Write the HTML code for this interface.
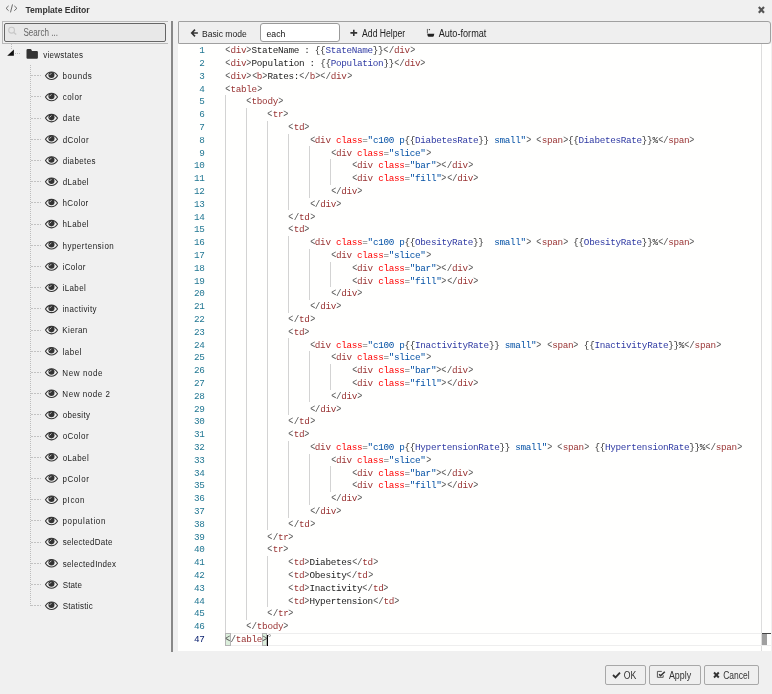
<!DOCTYPE html>
<html><head><meta charset="utf-8">
<style>
html,body{margin:0;padding:0;}
body{width:772px;height:694px;background:#f0f0f0;position:relative;overflow:hidden;font-family:"Liberation Sans",sans-serif;color:#333;}
.abs{position:absolute;}
#search{position:absolute;left:2px;top:21px;width:166px;height:23px;border-top:1px solid #b9b9b9;border-bottom:1px solid #b9b9b9;border-left:1px solid #b9b9b9;box-sizing:border-box;}
#search .in{position:absolute;left:1px;top:1px;width:162px;height:19px;border:1px solid #666;border-radius:2px;background:#e8e8e8;box-sizing:border-box;}
#splitter{position:absolute;left:171px;top:21px;width:2px;height:631px;background:#888;}
#toolbar{position:absolute;left:178px;top:21px;width:593px;height:23px;border:1px solid #a0a0a0;border-radius:1px 3px 3px 1px;background:#efefef;box-sizing:border-box;}
#each{position:absolute;left:260px;top:23px;width:80px;height:19px;border:1px solid #9a9a9a;border-radius:3px;background:#fff;box-sizing:border-box;}
#editor{position:absolute;left:178px;top:44px;width:593px;height:607px;background:#fffffe;overflow:hidden;}
#vline{position:absolute;left:761px;top:44px;width:1px;height:607px;background:#ddd;}
.ln,.num{position:absolute;font-family:"Liberation Mono",monospace;font-size:9.3px;letter-spacing:-0.307px;line-height:12.8px;height:12.8px;white-space:pre;color:#222;}
.num{left:174.6px;width:30px;text-align:right;color:#237893;}
.num.act{color:#0b216f;}
.p{color:#555;} .br{display:inline-block;transform:scale(0.9,1.25);transform-origin:50% 68%;} .t{color:#933;} .a{color:#ff0000;} .s{color:#0451a5;} .d{color:#333;} .v{color:#2f3aa3;}
.g{position:absolute;width:1px;height:12.8px;background:#d3d3d3;}
#actline{position:absolute;left:225px;top:633px;width:546px;height:13px;border-top:1px solid #eee;border-bottom:1px solid #eee;box-sizing:border-box;}
.hd{position:absolute;left:31px;width:10px;height:1px;background:repeating-linear-gradient(90deg,#c2c2c2 0 2px,transparent 2px 3px);}
.btn{position:absolute;top:665px;height:20px;border:1px solid #a8a8a8;border-radius:2px;background:#efefef;box-sizing:border-box;}
#ov{position:absolute;left:0;top:0;}
#ov text{font-family:"Liberation Sans",sans-serif;}
</style></head><body><div id="root" style="position:absolute;left:0;top:0;width:772px;height:694px;will-change:transform;">
<div id="search"><div class="in"></div></div>
<div id="splitter"></div>
<div id="toolbar"></div>
<div id="each"></div>
<div id="editor"></div>
<div id="vline"></div>
<div id="actline"></div>
<div class="g" style="left:225px;top:95.20px"></div><div class="g" style="left:225px;top:108.00px"></div><div class="g" style="left:246px;top:108.00px"></div><div class="g" style="left:225px;top:120.80px"></div><div class="g" style="left:246px;top:120.80px"></div><div class="g" style="left:267px;top:120.80px"></div><div class="g" style="left:225px;top:133.60px"></div><div class="g" style="left:246px;top:133.60px"></div><div class="g" style="left:267px;top:133.60px"></div><div class="g" style="left:288px;top:133.60px"></div><div class="g" style="left:225px;top:146.40px"></div><div class="g" style="left:246px;top:146.40px"></div><div class="g" style="left:267px;top:146.40px"></div><div class="g" style="left:288px;top:146.40px"></div><div class="g" style="left:309px;top:146.40px"></div><div class="g" style="left:225px;top:159.20px"></div><div class="g" style="left:246px;top:159.20px"></div><div class="g" style="left:267px;top:159.20px"></div><div class="g" style="left:288px;top:159.20px"></div><div class="g" style="left:309px;top:159.20px"></div><div class="g" style="left:330px;top:159.20px"></div><div class="g" style="left:225px;top:172.00px"></div><div class="g" style="left:246px;top:172.00px"></div><div class="g" style="left:267px;top:172.00px"></div><div class="g" style="left:288px;top:172.00px"></div><div class="g" style="left:309px;top:172.00px"></div><div class="g" style="left:330px;top:172.00px"></div><div class="g" style="left:225px;top:184.80px"></div><div class="g" style="left:246px;top:184.80px"></div><div class="g" style="left:267px;top:184.80px"></div><div class="g" style="left:288px;top:184.80px"></div><div class="g" style="left:309px;top:184.80px"></div><div class="g" style="left:225px;top:197.60px"></div><div class="g" style="left:246px;top:197.60px"></div><div class="g" style="left:267px;top:197.60px"></div><div class="g" style="left:288px;top:197.60px"></div><div class="g" style="left:225px;top:210.40px"></div><div class="g" style="left:246px;top:210.40px"></div><div class="g" style="left:267px;top:210.40px"></div><div class="g" style="left:225px;top:223.20px"></div><div class="g" style="left:246px;top:223.20px"></div><div class="g" style="left:267px;top:223.20px"></div><div class="g" style="left:225px;top:236.00px"></div><div class="g" style="left:246px;top:236.00px"></div><div class="g" style="left:267px;top:236.00px"></div><div class="g" style="left:288px;top:236.00px"></div><div class="g" style="left:225px;top:248.80px"></div><div class="g" style="left:246px;top:248.80px"></div><div class="g" style="left:267px;top:248.80px"></div><div class="g" style="left:288px;top:248.80px"></div><div class="g" style="left:309px;top:248.80px"></div><div class="g" style="left:225px;top:261.60px"></div><div class="g" style="left:246px;top:261.60px"></div><div class="g" style="left:267px;top:261.60px"></div><div class="g" style="left:288px;top:261.60px"></div><div class="g" style="left:309px;top:261.60px"></div><div class="g" style="left:330px;top:261.60px"></div><div class="g" style="left:225px;top:274.40px"></div><div class="g" style="left:246px;top:274.40px"></div><div class="g" style="left:267px;top:274.40px"></div><div class="g" style="left:288px;top:274.40px"></div><div class="g" style="left:309px;top:274.40px"></div><div class="g" style="left:330px;top:274.40px"></div><div class="g" style="left:225px;top:287.20px"></div><div class="g" style="left:246px;top:287.20px"></div><div class="g" style="left:267px;top:287.20px"></div><div class="g" style="left:288px;top:287.20px"></div><div class="g" style="left:309px;top:287.20px"></div><div class="g" style="left:225px;top:300.00px"></div><div class="g" style="left:246px;top:300.00px"></div><div class="g" style="left:267px;top:300.00px"></div><div class="g" style="left:288px;top:300.00px"></div><div class="g" style="left:225px;top:312.80px"></div><div class="g" style="left:246px;top:312.80px"></div><div class="g" style="left:267px;top:312.80px"></div><div class="g" style="left:225px;top:325.60px"></div><div class="g" style="left:246px;top:325.60px"></div><div class="g" style="left:267px;top:325.60px"></div><div class="g" style="left:225px;top:338.40px"></div><div class="g" style="left:246px;top:338.40px"></div><div class="g" style="left:267px;top:338.40px"></div><div class="g" style="left:288px;top:338.40px"></div><div class="g" style="left:225px;top:351.20px"></div><div class="g" style="left:246px;top:351.20px"></div><div class="g" style="left:267px;top:351.20px"></div><div class="g" style="left:288px;top:351.20px"></div><div class="g" style="left:309px;top:351.20px"></div><div class="g" style="left:225px;top:364.00px"></div><div class="g" style="left:246px;top:364.00px"></div><div class="g" style="left:267px;top:364.00px"></div><div class="g" style="left:288px;top:364.00px"></div><div class="g" style="left:309px;top:364.00px"></div><div class="g" style="left:330px;top:364.00px"></div><div class="g" style="left:225px;top:376.80px"></div><div class="g" style="left:246px;top:376.80px"></div><div class="g" style="left:267px;top:376.80px"></div><div class="g" style="left:288px;top:376.80px"></div><div class="g" style="left:309px;top:376.80px"></div><div class="g" style="left:330px;top:376.80px"></div><div class="g" style="left:225px;top:389.60px"></div><div class="g" style="left:246px;top:389.60px"></div><div class="g" style="left:267px;top:389.60px"></div><div class="g" style="left:288px;top:389.60px"></div><div class="g" style="left:309px;top:389.60px"></div><div class="g" style="left:225px;top:402.40px"></div><div class="g" style="left:246px;top:402.40px"></div><div class="g" style="left:267px;top:402.40px"></div><div class="g" style="left:288px;top:402.40px"></div><div class="g" style="left:225px;top:415.20px"></div><div class="g" style="left:246px;top:415.20px"></div><div class="g" style="left:267px;top:415.20px"></div><div class="g" style="left:225px;top:428.00px"></div><div class="g" style="left:246px;top:428.00px"></div><div class="g" style="left:267px;top:428.00px"></div><div class="g" style="left:225px;top:440.80px"></div><div class="g" style="left:246px;top:440.80px"></div><div class="g" style="left:267px;top:440.80px"></div><div class="g" style="left:288px;top:440.80px"></div><div class="g" style="left:225px;top:453.60px"></div><div class="g" style="left:246px;top:453.60px"></div><div class="g" style="left:267px;top:453.60px"></div><div class="g" style="left:288px;top:453.60px"></div><div class="g" style="left:309px;top:453.60px"></div><div class="g" style="left:225px;top:466.40px"></div><div class="g" style="left:246px;top:466.40px"></div><div class="g" style="left:267px;top:466.40px"></div><div class="g" style="left:288px;top:466.40px"></div><div class="g" style="left:309px;top:466.40px"></div><div class="g" style="left:330px;top:466.40px"></div><div class="g" style="left:225px;top:479.20px"></div><div class="g" style="left:246px;top:479.20px"></div><div class="g" style="left:267px;top:479.20px"></div><div class="g" style="left:288px;top:479.20px"></div><div class="g" style="left:309px;top:479.20px"></div><div class="g" style="left:330px;top:479.20px"></div><div class="g" style="left:225px;top:492.00px"></div><div class="g" style="left:246px;top:492.00px"></div><div class="g" style="left:267px;top:492.00px"></div><div class="g" style="left:288px;top:492.00px"></div><div class="g" style="left:309px;top:492.00px"></div><div class="g" style="left:225px;top:504.80px"></div><div class="g" style="left:246px;top:504.80px"></div><div class="g" style="left:267px;top:504.80px"></div><div class="g" style="left:288px;top:504.80px"></div><div class="g" style="left:225px;top:517.60px"></div><div class="g" style="left:246px;top:517.60px"></div><div class="g" style="left:267px;top:517.60px"></div><div class="g" style="left:225px;top:530.40px"></div><div class="g" style="left:246px;top:530.40px"></div><div class="g" style="left:225px;top:543.20px"></div><div class="g" style="left:246px;top:543.20px"></div><div class="g" style="left:225px;top:556.00px"></div><div class="g" style="left:246px;top:556.00px"></div><div class="g" style="left:267px;top:556.00px"></div><div class="g" style="left:225px;top:568.80px"></div><div class="g" style="left:246px;top:568.80px"></div><div class="g" style="left:267px;top:568.80px"></div><div class="g" style="left:225px;top:581.60px"></div><div class="g" style="left:246px;top:581.60px"></div><div class="g" style="left:267px;top:581.60px"></div><div class="g" style="left:225px;top:594.40px"></div><div class="g" style="left:246px;top:594.40px"></div><div class="g" style="left:267px;top:594.40px"></div><div class="g" style="left:225px;top:607.20px"></div><div class="g" style="left:246px;top:607.20px"></div><div class="g" style="left:225px;top:620.00px"></div>
<div class="abs" style="left:225px;top:633px;width:6px;height:13px;background:#dcefdc;border:1px solid #b4b4b4;box-sizing:border-box;"></div>
<div class="abs" style="left:262px;top:633px;width:5px;height:13px;background:#dcefdc;border:1px solid #b4b4b4;box-sizing:border-box;"></div>
<div class="ln" style="top:45.20px;left:225.20px"><span class="p br">&lt;</span><span class="t">div</span><span class="p br">&gt;</span>StateName : <span class="d">{{</span><span class="v">StateName</span><span class="d">}}</span><span class="p br">&lt;</span><span class="p">/</span><span class="t">div</span><span class="p br">&gt;</span></div><div class="num" style="top:45.20px">1</div><div class="ln" style="top:58.00px;left:225.20px"><span class="p br">&lt;</span><span class="t">div</span><span class="p br">&gt;</span>Population : <span class="d">{{</span><span class="v">Population</span><span class="d">}}</span><span class="p br">&lt;</span><span class="p">/</span><span class="t">div</span><span class="p br">&gt;</span></div><div class="num" style="top:58.00px">2</div><div class="ln" style="top:70.80px;left:225.20px"><span class="p br">&lt;</span><span class="t">div</span><span class="p br">&gt;</span><span class="p br">&lt;</span><span class="t">b</span><span class="p br">&gt;</span>Rates:<span class="p br">&lt;</span><span class="p">/</span><span class="t">b</span><span class="p br">&gt;</span><span class="p br">&lt;</span><span class="p">/</span><span class="t">div</span><span class="p br">&gt;</span></div><div class="num" style="top:70.80px">3</div><div class="ln" style="top:83.60px;left:225.20px"><span class="p br">&lt;</span><span class="t">table</span><span class="p br">&gt;</span></div><div class="num" style="top:83.60px">4</div><div class="ln" style="top:96.40px;left:246.29px"><span class="p br">&lt;</span><span class="t">tbody</span><span class="p br">&gt;</span></div><div class="num" style="top:96.40px">5</div><div class="ln" style="top:109.20px;left:267.38px"><span class="p br">&lt;</span><span class="t">tr</span><span class="p br">&gt;</span></div><div class="num" style="top:109.20px">6</div><div class="ln" style="top:122.00px;left:288.48px"><span class="p br">&lt;</span><span class="t">td</span><span class="p br">&gt;</span></div><div class="num" style="top:122.00px">7</div><div class="ln" style="top:134.80px;left:309.57px"><span class="p br">&lt;</span><span class="t">div</span> <span class="a">class</span><span class="p">=</span><span class="s">&quot;</span><span class="s">c100 p</span><span class="d">{{</span><span class="v">DiabetesRate</span><span class="d">}}</span><span class="s"> small</span><span class="s">&quot;</span><span class="p br">&gt;</span> <span class="p br">&lt;</span><span class="t">span</span><span class="p br">&gt;</span><span class="d">{{</span><span class="v">DiabetesRate</span><span class="d">}}</span>%<span class="p br">&lt;</span><span class="p">/</span><span class="t">span</span><span class="p br">&gt;</span></div><div class="num" style="top:134.80px">8</div><div class="ln" style="top:147.60px;left:330.66px"><span class="p br">&lt;</span><span class="t">div</span> <span class="a">class</span><span class="p">=</span><span class="s">&quot;</span><span class="s">slice</span><span class="s">&quot;</span><span class="p br">&gt;</span></div><div class="num" style="top:147.60px">9</div><div class="ln" style="top:160.40px;left:351.75px"><span class="p br">&lt;</span><span class="t">div</span> <span class="a">class</span><span class="p">=</span><span class="s">&quot;</span><span class="s">bar</span><span class="s">&quot;</span><span class="p br">&gt;</span><span class="p br">&lt;</span><span class="p">/</span><span class="t">div</span><span class="p br">&gt;</span></div><div class="num" style="top:160.40px">10</div><div class="ln" style="top:173.20px;left:351.75px"><span class="p br">&lt;</span><span class="t">div</span> <span class="a">class</span><span class="p">=</span><span class="s">&quot;</span><span class="s">fill</span><span class="s">&quot;</span><span class="p br">&gt;</span><span class="p br">&lt;</span><span class="p">/</span><span class="t">div</span><span class="p br">&gt;</span></div><div class="num" style="top:173.20px">11</div><div class="ln" style="top:186.00px;left:330.66px"><span class="p br">&lt;</span><span class="p">/</span><span class="t">div</span><span class="p br">&gt;</span></div><div class="num" style="top:186.00px">12</div><div class="ln" style="top:198.80px;left:309.57px"><span class="p br">&lt;</span><span class="p">/</span><span class="t">div</span><span class="p br">&gt;</span></div><div class="num" style="top:198.80px">13</div><div class="ln" style="top:211.60px;left:288.48px"><span class="p br">&lt;</span><span class="p">/</span><span class="t">td</span><span class="p br">&gt;</span></div><div class="num" style="top:211.60px">14</div><div class="ln" style="top:224.40px;left:288.48px"><span class="p br">&lt;</span><span class="t">td</span><span class="p br">&gt;</span></div><div class="num" style="top:224.40px">15</div><div class="ln" style="top:237.20px;left:309.57px"><span class="p br">&lt;</span><span class="t">div</span> <span class="a">class</span><span class="p">=</span><span class="s">&quot;</span><span class="s">c100 p</span><span class="d">{{</span><span class="v">ObesityRate</span><span class="d">}}</span><span class="s">  small</span><span class="s">&quot;</span><span class="p br">&gt;</span> <span class="p br">&lt;</span><span class="t">span</span><span class="p br">&gt;</span> <span class="d">{{</span><span class="v">ObesityRate</span><span class="d">}}</span>%<span class="p br">&lt;</span><span class="p">/</span><span class="t">span</span><span class="p br">&gt;</span></div><div class="num" style="top:237.20px">16</div><div class="ln" style="top:250.00px;left:330.66px"><span class="p br">&lt;</span><span class="t">div</span> <span class="a">class</span><span class="p">=</span><span class="s">&quot;</span><span class="s">slice</span><span class="s">&quot;</span><span class="p br">&gt;</span></div><div class="num" style="top:250.00px">17</div><div class="ln" style="top:262.80px;left:351.75px"><span class="p br">&lt;</span><span class="t">div</span> <span class="a">class</span><span class="p">=</span><span class="s">&quot;</span><span class="s">bar</span><span class="s">&quot;</span><span class="p br">&gt;</span><span class="p br">&lt;</span><span class="p">/</span><span class="t">div</span><span class="p br">&gt;</span></div><div class="num" style="top:262.80px">18</div><div class="ln" style="top:275.60px;left:351.75px"><span class="p br">&lt;</span><span class="t">div</span> <span class="a">class</span><span class="p">=</span><span class="s">&quot;</span><span class="s">fill</span><span class="s">&quot;</span><span class="p br">&gt;</span><span class="p br">&lt;</span><span class="p">/</span><span class="t">div</span><span class="p br">&gt;</span></div><div class="num" style="top:275.60px">19</div><div class="ln" style="top:288.40px;left:330.66px"><span class="p br">&lt;</span><span class="p">/</span><span class="t">div</span><span class="p br">&gt;</span></div><div class="num" style="top:288.40px">20</div><div class="ln" style="top:301.20px;left:309.57px"><span class="p br">&lt;</span><span class="p">/</span><span class="t">div</span><span class="p br">&gt;</span></div><div class="num" style="top:301.20px">21</div><div class="ln" style="top:314.00px;left:288.48px"><span class="p br">&lt;</span><span class="p">/</span><span class="t">td</span><span class="p br">&gt;</span></div><div class="num" style="top:314.00px">22</div><div class="ln" style="top:326.80px;left:288.48px"><span class="p br">&lt;</span><span class="t">td</span><span class="p br">&gt;</span></div><div class="num" style="top:326.80px">23</div><div class="ln" style="top:339.60px;left:309.57px"><span class="p br">&lt;</span><span class="t">div</span> <span class="a">class</span><span class="p">=</span><span class="s">&quot;</span><span class="s">c100 p</span><span class="d">{{</span><span class="v">InactivityRate</span><span class="d">}}</span><span class="s"> small</span><span class="s">&quot;</span><span class="p br">&gt;</span> <span class="p br">&lt;</span><span class="t">span</span><span class="p br">&gt;</span> <span class="d">{{</span><span class="v">InactivityRate</span><span class="d">}}</span>%<span class="p br">&lt;</span><span class="p">/</span><span class="t">span</span><span class="p br">&gt;</span></div><div class="num" style="top:339.60px">24</div><div class="ln" style="top:352.40px;left:330.66px"><span class="p br">&lt;</span><span class="t">div</span> <span class="a">class</span><span class="p">=</span><span class="s">&quot;</span><span class="s">slice</span><span class="s">&quot;</span><span class="p br">&gt;</span></div><div class="num" style="top:352.40px">25</div><div class="ln" style="top:365.20px;left:351.75px"><span class="p br">&lt;</span><span class="t">div</span> <span class="a">class</span><span class="p">=</span><span class="s">&quot;</span><span class="s">bar</span><span class="s">&quot;</span><span class="p br">&gt;</span><span class="p br">&lt;</span><span class="p">/</span><span class="t">div</span><span class="p br">&gt;</span></div><div class="num" style="top:365.20px">26</div><div class="ln" style="top:378.00px;left:351.75px"><span class="p br">&lt;</span><span class="t">div</span> <span class="a">class</span><span class="p">=</span><span class="s">&quot;</span><span class="s">fill</span><span class="s">&quot;</span><span class="p br">&gt;</span><span class="p br">&lt;</span><span class="p">/</span><span class="t">div</span><span class="p br">&gt;</span></div><div class="num" style="top:378.00px">27</div><div class="ln" style="top:390.80px;left:330.66px"><span class="p br">&lt;</span><span class="p">/</span><span class="t">div</span><span class="p br">&gt;</span></div><div class="num" style="top:390.80px">28</div><div class="ln" style="top:403.60px;left:309.57px"><span class="p br">&lt;</span><span class="p">/</span><span class="t">div</span><span class="p br">&gt;</span></div><div class="num" style="top:403.60px">29</div><div class="ln" style="top:416.40px;left:288.48px"><span class="p br">&lt;</span><span class="p">/</span><span class="t">td</span><span class="p br">&gt;</span></div><div class="num" style="top:416.40px">30</div><div class="ln" style="top:429.20px;left:288.48px"><span class="p br">&lt;</span><span class="t">td</span><span class="p br">&gt;</span></div><div class="num" style="top:429.20px">31</div><div class="ln" style="top:442.00px;left:309.57px"><span class="p br">&lt;</span><span class="t">div</span> <span class="a">class</span><span class="p">=</span><span class="s">&quot;</span><span class="s">c100 p</span><span class="d">{{</span><span class="v">HypertensionRate</span><span class="d">}}</span><span class="s"> small</span><span class="s">&quot;</span><span class="p br">&gt;</span> <span class="p br">&lt;</span><span class="t">span</span><span class="p br">&gt;</span> <span class="d">{{</span><span class="v">HypertensionRate</span><span class="d">}}</span>%<span class="p br">&lt;</span><span class="p">/</span><span class="t">span</span><span class="p br">&gt;</span></div><div class="num" style="top:442.00px">32</div><div class="ln" style="top:454.80px;left:330.66px"><span class="p br">&lt;</span><span class="t">div</span> <span class="a">class</span><span class="p">=</span><span class="s">&quot;</span><span class="s">slice</span><span class="s">&quot;</span><span class="p br">&gt;</span></div><div class="num" style="top:454.80px">33</div><div class="ln" style="top:467.60px;left:351.75px"><span class="p br">&lt;</span><span class="t">div</span> <span class="a">class</span><span class="p">=</span><span class="s">&quot;</span><span class="s">bar</span><span class="s">&quot;</span><span class="p br">&gt;</span><span class="p br">&lt;</span><span class="p">/</span><span class="t">div</span><span class="p br">&gt;</span></div><div class="num" style="top:467.60px">34</div><div class="ln" style="top:480.40px;left:351.75px"><span class="p br">&lt;</span><span class="t">div</span> <span class="a">class</span><span class="p">=</span><span class="s">&quot;</span><span class="s">fill</span><span class="s">&quot;</span><span class="p br">&gt;</span><span class="p br">&lt;</span><span class="p">/</span><span class="t">div</span><span class="p br">&gt;</span></div><div class="num" style="top:480.40px">35</div><div class="ln" style="top:493.20px;left:330.66px"><span class="p br">&lt;</span><span class="p">/</span><span class="t">div</span><span class="p br">&gt;</span></div><div class="num" style="top:493.20px">36</div><div class="ln" style="top:506.00px;left:309.57px"><span class="p br">&lt;</span><span class="p">/</span><span class="t">div</span><span class="p br">&gt;</span></div><div class="num" style="top:506.00px">37</div><div class="ln" style="top:518.80px;left:288.48px"><span class="p br">&lt;</span><span class="p">/</span><span class="t">td</span><span class="p br">&gt;</span></div><div class="num" style="top:518.80px">38</div><div class="ln" style="top:531.60px;left:267.38px"><span class="p br">&lt;</span><span class="p">/</span><span class="t">tr</span><span class="p br">&gt;</span></div><div class="num" style="top:531.60px">39</div><div class="ln" style="top:544.40px;left:267.38px"><span class="p br">&lt;</span><span class="t">tr</span><span class="p br">&gt;</span></div><div class="num" style="top:544.40px">40</div><div class="ln" style="top:557.20px;left:288.48px"><span class="p br">&lt;</span><span class="t">td</span><span class="p br">&gt;</span>Diabetes<span class="p br">&lt;</span><span class="p">/</span><span class="t">td</span><span class="p br">&gt;</span></div><div class="num" style="top:557.20px">41</div><div class="ln" style="top:570.00px;left:288.48px"><span class="p br">&lt;</span><span class="t">td</span><span class="p br">&gt;</span>Obesity<span class="p br">&lt;</span><span class="p">/</span><span class="t">td</span><span class="p br">&gt;</span></div><div class="num" style="top:570.00px">42</div><div class="ln" style="top:582.80px;left:288.48px"><span class="p br">&lt;</span><span class="t">td</span><span class="p br">&gt;</span>Inactivity<span class="p br">&lt;</span><span class="p">/</span><span class="t">td</span><span class="p br">&gt;</span></div><div class="num" style="top:582.80px">43</div><div class="ln" style="top:595.60px;left:288.48px"><span class="p br">&lt;</span><span class="t">td</span><span class="p br">&gt;</span>Hypertension<span class="p br">&lt;</span><span class="p">/</span><span class="t">td</span><span class="p br">&gt;</span></div><div class="num" style="top:595.60px">44</div><div class="ln" style="top:608.40px;left:267.38px"><span class="p br">&lt;</span><span class="p">/</span><span class="t">tr</span><span class="p br">&gt;</span></div><div class="num" style="top:608.40px">45</div><div class="ln" style="top:621.20px;left:246.29px"><span class="p br">&lt;</span><span class="p">/</span><span class="t">tbody</span><span class="p br">&gt;</span></div><div class="num" style="top:621.20px">46</div><div class="ln" style="top:634.00px;left:225.20px"><span class="p br">&lt;</span><span class="p">/</span><span class="t">table</span><span class="p br">&gt;</span></div><div class="num act" style="top:634.00px">47</div>
<div class="abs" style="left:267px;top:635px;width:1px;height:11px;background:#000;"></div>
<div class="abs" style="left:267.8px;top:633.6px;width:1.4px;height:1.4px;border:0.6px solid #999;border-radius:50%;"></div>
<div class="abs" style="left:762px;top:633px;width:5px;height:12px;background:#a0a0a0;"></div>
<div class="abs" style="left:762px;top:633px;width:9px;height:1px;background:#444;"></div>
<div class="abs" style="left:11px;top:44px;width:1px;height:6px;background:repeating-linear-gradient(180deg,#bdbdbd 0 1px,transparent 1px 2px);"></div>
<div class="abs" style="left:14.5px;top:53px;width:6px;height:1px;background:repeating-linear-gradient(90deg,#bdbdbd 0 1px,transparent 1px 2px);"></div>
<div class="abs" style="left:29.5px;top:65px;width:1px;height:541px;background:repeating-linear-gradient(180deg,#bdbdbd 0 1px,transparent 1px 2px);"></div>
<div class="hd" style="top:75px"></div><div class="hd" style="top:96px"></div><div class="hd" style="top:118px"></div><div class="hd" style="top:139px"></div><div class="hd" style="top:160px"></div><div class="hd" style="top:181px"></div><div class="hd" style="top:202px"></div><div class="hd" style="top:224px"></div><div class="hd" style="top:245px"></div><div class="hd" style="top:266px"></div><div class="hd" style="top:287px"></div><div class="hd" style="top:308px"></div><div class="hd" style="top:330px"></div><div class="hd" style="top:351px"></div><div class="hd" style="top:372px"></div><div class="hd" style="top:393px"></div><div class="hd" style="top:414px"></div><div class="hd" style="top:436px"></div><div class="hd" style="top:457px"></div><div class="hd" style="top:478px"></div><div class="hd" style="top:499px"></div><div class="hd" style="top:520px"></div><div class="hd" style="top:542px"></div><div class="hd" style="top:563px"></div><div class="hd" style="top:584px"></div><div class="hd" style="top:605px"></div>
<div class="btn" style="left:605px;width:41px"></div>
<div class="btn" style="left:649px;width:52px"></div>
<div class="btn" style="left:704px;width:55px"></div>
<svg id="ov" width="772" height="694" viewBox="0 0 772 694">

<path d="M8.6 5.9 L6.1 8.3 L8.6 10.7 M14.3 5.9 L16.9 8.3 L14.3 10.7 M12.5 4.4 L10.5 12.4" fill="none" stroke="#5a5a5a" stroke-width="0.9"/>
<path d="M758.8 7 L764 12.8 M764 7 L758.8 12.8" stroke="#555" stroke-width="2.1"/>
<circle cx="11.6" cy="30.2" r="2.9" fill="none" stroke="#c8c8c8" stroke-width="1.1"/><path d="M13.8 32.4 L16.2 34.6" stroke="#c8c8c8" stroke-width="1.4"/>
<path d="M195 29.6 L191.7 33 L195 36.4 M192.2 33 L197.9 33" fill="none" stroke="#333" stroke-width="1.6"/>
<path d="M353.8 29.8 L353.8 36 M350.4 32.9 L357.2 32.9" stroke="#333" stroke-width="1.6"/>
<rect x="426.9" y="28.9" width="1" height="4.4" fill="#666"/><circle cx="429.4" cy="29.6" r="0.7" fill="#333"/>
<path d="M427.2 33.8 L434.3 33.8 L433.8 36 Q433.6 36.7 432.8 36.7 L428.7 36.7 Q427.9 36.7 427.7 36 Z" fill="#222"/>
<path d="M613 675 L615.5 677.4 L620 672.6" fill="none" stroke="#333" stroke-width="1.8"/>
<path d="M663.2 675.2 L663.2 677.3 L657.4 677.3 L657.4 671.4 L661.8 671.4" fill="none" stroke="#555" stroke-width="1"/>
<path d="M659.1 674.3 L660.6 675.7 L664.8 671.8" fill="none" stroke="#333" stroke-width="1.5"/>
<path d="M714 672.5 L718.8 677.5 M718.8 672.5 L714 677.5" stroke="#333" stroke-width="1.9"/>
<path d="M7.2 55.8 L13.9 55.8 L13.9 49.4 Z" fill="#111"/>
<path d="M27.8 49 L30.6 49 Q31 49 31.3 49.5 L32 51 L36.8 51 Q37.9 51 37.9 52 L37.9 57.7 Q37.9 58.8 36.8 58.8 L27.6 58.8 Q26.5 58.8 26.5 57.7 L26.5 50.2 Q26.5 49 27.8 49 Z" fill="#333"/>

<g transform="translate(44.90,71.45)"><path d="M0.55 4.25 C2.4 1.2 4.3 0.5 6.6 0.5 C8.9 0.5 10.8 1.2 12.65 4.25 C10.8 7.3 8.9 8.0 6.6 8.0 C4.3 8.0 2.4 7.3 0.55 4.25 Z" fill="none" stroke="#333" stroke-width="1.05"/><circle cx="6.55" cy="3.5" r="3.05" fill="#333"/><path d="M4.9 3.3 L6.3 1.9" stroke="#eee" stroke-width="0.8" stroke-linecap="round"/></g><g transform="translate(44.90,92.65)"><path d="M0.55 4.25 C2.4 1.2 4.3 0.5 6.6 0.5 C8.9 0.5 10.8 1.2 12.65 4.25 C10.8 7.3 8.9 8.0 6.6 8.0 C4.3 8.0 2.4 7.3 0.55 4.25 Z" fill="none" stroke="#333" stroke-width="1.05"/><circle cx="6.55" cy="3.5" r="3.05" fill="#333"/><path d="M4.9 3.3 L6.3 1.9" stroke="#eee" stroke-width="0.8" stroke-linecap="round"/></g><g transform="translate(44.90,113.85)"><path d="M0.55 4.25 C2.4 1.2 4.3 0.5 6.6 0.5 C8.9 0.5 10.8 1.2 12.65 4.25 C10.8 7.3 8.9 8.0 6.6 8.0 C4.3 8.0 2.4 7.3 0.55 4.25 Z" fill="none" stroke="#333" stroke-width="1.05"/><circle cx="6.55" cy="3.5" r="3.05" fill="#333"/><path d="M4.9 3.3 L6.3 1.9" stroke="#eee" stroke-width="0.8" stroke-linecap="round"/></g><g transform="translate(44.90,135.05)"><path d="M0.55 4.25 C2.4 1.2 4.3 0.5 6.6 0.5 C8.9 0.5 10.8 1.2 12.65 4.25 C10.8 7.3 8.9 8.0 6.6 8.0 C4.3 8.0 2.4 7.3 0.55 4.25 Z" fill="none" stroke="#333" stroke-width="1.05"/><circle cx="6.55" cy="3.5" r="3.05" fill="#333"/><path d="M4.9 3.3 L6.3 1.9" stroke="#eee" stroke-width="0.8" stroke-linecap="round"/></g><g transform="translate(44.90,156.25)"><path d="M0.55 4.25 C2.4 1.2 4.3 0.5 6.6 0.5 C8.9 0.5 10.8 1.2 12.65 4.25 C10.8 7.3 8.9 8.0 6.6 8.0 C4.3 8.0 2.4 7.3 0.55 4.25 Z" fill="none" stroke="#333" stroke-width="1.05"/><circle cx="6.55" cy="3.5" r="3.05" fill="#333"/><path d="M4.9 3.3 L6.3 1.9" stroke="#eee" stroke-width="0.8" stroke-linecap="round"/></g><g transform="translate(44.90,177.45)"><path d="M0.55 4.25 C2.4 1.2 4.3 0.5 6.6 0.5 C8.9 0.5 10.8 1.2 12.65 4.25 C10.8 7.3 8.9 8.0 6.6 8.0 C4.3 8.0 2.4 7.3 0.55 4.25 Z" fill="none" stroke="#333" stroke-width="1.05"/><circle cx="6.55" cy="3.5" r="3.05" fill="#333"/><path d="M4.9 3.3 L6.3 1.9" stroke="#eee" stroke-width="0.8" stroke-linecap="round"/></g><g transform="translate(44.90,198.65)"><path d="M0.55 4.25 C2.4 1.2 4.3 0.5 6.6 0.5 C8.9 0.5 10.8 1.2 12.65 4.25 C10.8 7.3 8.9 8.0 6.6 8.0 C4.3 8.0 2.4 7.3 0.55 4.25 Z" fill="none" stroke="#333" stroke-width="1.05"/><circle cx="6.55" cy="3.5" r="3.05" fill="#333"/><path d="M4.9 3.3 L6.3 1.9" stroke="#eee" stroke-width="0.8" stroke-linecap="round"/></g><g transform="translate(44.90,219.85)"><path d="M0.55 4.25 C2.4 1.2 4.3 0.5 6.6 0.5 C8.9 0.5 10.8 1.2 12.65 4.25 C10.8 7.3 8.9 8.0 6.6 8.0 C4.3 8.0 2.4 7.3 0.55 4.25 Z" fill="none" stroke="#333" stroke-width="1.05"/><circle cx="6.55" cy="3.5" r="3.05" fill="#333"/><path d="M4.9 3.3 L6.3 1.9" stroke="#eee" stroke-width="0.8" stroke-linecap="round"/></g><g transform="translate(44.90,241.05)"><path d="M0.55 4.25 C2.4 1.2 4.3 0.5 6.6 0.5 C8.9 0.5 10.8 1.2 12.65 4.25 C10.8 7.3 8.9 8.0 6.6 8.0 C4.3 8.0 2.4 7.3 0.55 4.25 Z" fill="none" stroke="#333" stroke-width="1.05"/><circle cx="6.55" cy="3.5" r="3.05" fill="#333"/><path d="M4.9 3.3 L6.3 1.9" stroke="#eee" stroke-width="0.8" stroke-linecap="round"/></g><g transform="translate(44.90,262.25)"><path d="M0.55 4.25 C2.4 1.2 4.3 0.5 6.6 0.5 C8.9 0.5 10.8 1.2 12.65 4.25 C10.8 7.3 8.9 8.0 6.6 8.0 C4.3 8.0 2.4 7.3 0.55 4.25 Z" fill="none" stroke="#333" stroke-width="1.05"/><circle cx="6.55" cy="3.5" r="3.05" fill="#333"/><path d="M4.9 3.3 L6.3 1.9" stroke="#eee" stroke-width="0.8" stroke-linecap="round"/></g><g transform="translate(44.90,283.45)"><path d="M0.55 4.25 C2.4 1.2 4.3 0.5 6.6 0.5 C8.9 0.5 10.8 1.2 12.65 4.25 C10.8 7.3 8.9 8.0 6.6 8.0 C4.3 8.0 2.4 7.3 0.55 4.25 Z" fill="none" stroke="#333" stroke-width="1.05"/><circle cx="6.55" cy="3.5" r="3.05" fill="#333"/><path d="M4.9 3.3 L6.3 1.9" stroke="#eee" stroke-width="0.8" stroke-linecap="round"/></g><g transform="translate(44.90,304.65)"><path d="M0.55 4.25 C2.4 1.2 4.3 0.5 6.6 0.5 C8.9 0.5 10.8 1.2 12.65 4.25 C10.8 7.3 8.9 8.0 6.6 8.0 C4.3 8.0 2.4 7.3 0.55 4.25 Z" fill="none" stroke="#333" stroke-width="1.05"/><circle cx="6.55" cy="3.5" r="3.05" fill="#333"/><path d="M4.9 3.3 L6.3 1.9" stroke="#eee" stroke-width="0.8" stroke-linecap="round"/></g><g transform="translate(44.90,325.85)"><path d="M0.55 4.25 C2.4 1.2 4.3 0.5 6.6 0.5 C8.9 0.5 10.8 1.2 12.65 4.25 C10.8 7.3 8.9 8.0 6.6 8.0 C4.3 8.0 2.4 7.3 0.55 4.25 Z" fill="none" stroke="#333" stroke-width="1.05"/><circle cx="6.55" cy="3.5" r="3.05" fill="#333"/><path d="M4.9 3.3 L6.3 1.9" stroke="#eee" stroke-width="0.8" stroke-linecap="round"/></g><g transform="translate(44.90,347.05)"><path d="M0.55 4.25 C2.4 1.2 4.3 0.5 6.6 0.5 C8.9 0.5 10.8 1.2 12.65 4.25 C10.8 7.3 8.9 8.0 6.6 8.0 C4.3 8.0 2.4 7.3 0.55 4.25 Z" fill="none" stroke="#333" stroke-width="1.05"/><circle cx="6.55" cy="3.5" r="3.05" fill="#333"/><path d="M4.9 3.3 L6.3 1.9" stroke="#eee" stroke-width="0.8" stroke-linecap="round"/></g><g transform="translate(44.90,368.25)"><path d="M0.55 4.25 C2.4 1.2 4.3 0.5 6.6 0.5 C8.9 0.5 10.8 1.2 12.65 4.25 C10.8 7.3 8.9 8.0 6.6 8.0 C4.3 8.0 2.4 7.3 0.55 4.25 Z" fill="none" stroke="#333" stroke-width="1.05"/><circle cx="6.55" cy="3.5" r="3.05" fill="#333"/><path d="M4.9 3.3 L6.3 1.9" stroke="#eee" stroke-width="0.8" stroke-linecap="round"/></g><g transform="translate(44.90,389.45)"><path d="M0.55 4.25 C2.4 1.2 4.3 0.5 6.6 0.5 C8.9 0.5 10.8 1.2 12.65 4.25 C10.8 7.3 8.9 8.0 6.6 8.0 C4.3 8.0 2.4 7.3 0.55 4.25 Z" fill="none" stroke="#333" stroke-width="1.05"/><circle cx="6.55" cy="3.5" r="3.05" fill="#333"/><path d="M4.9 3.3 L6.3 1.9" stroke="#eee" stroke-width="0.8" stroke-linecap="round"/></g><g transform="translate(44.90,410.65)"><path d="M0.55 4.25 C2.4 1.2 4.3 0.5 6.6 0.5 C8.9 0.5 10.8 1.2 12.65 4.25 C10.8 7.3 8.9 8.0 6.6 8.0 C4.3 8.0 2.4 7.3 0.55 4.25 Z" fill="none" stroke="#333" stroke-width="1.05"/><circle cx="6.55" cy="3.5" r="3.05" fill="#333"/><path d="M4.9 3.3 L6.3 1.9" stroke="#eee" stroke-width="0.8" stroke-linecap="round"/></g><g transform="translate(44.90,431.85)"><path d="M0.55 4.25 C2.4 1.2 4.3 0.5 6.6 0.5 C8.9 0.5 10.8 1.2 12.65 4.25 C10.8 7.3 8.9 8.0 6.6 8.0 C4.3 8.0 2.4 7.3 0.55 4.25 Z" fill="none" stroke="#333" stroke-width="1.05"/><circle cx="6.55" cy="3.5" r="3.05" fill="#333"/><path d="M4.9 3.3 L6.3 1.9" stroke="#eee" stroke-width="0.8" stroke-linecap="round"/></g><g transform="translate(44.90,453.05)"><path d="M0.55 4.25 C2.4 1.2 4.3 0.5 6.6 0.5 C8.9 0.5 10.8 1.2 12.65 4.25 C10.8 7.3 8.9 8.0 6.6 8.0 C4.3 8.0 2.4 7.3 0.55 4.25 Z" fill="none" stroke="#333" stroke-width="1.05"/><circle cx="6.55" cy="3.5" r="3.05" fill="#333"/><path d="M4.9 3.3 L6.3 1.9" stroke="#eee" stroke-width="0.8" stroke-linecap="round"/></g><g transform="translate(44.90,474.25)"><path d="M0.55 4.25 C2.4 1.2 4.3 0.5 6.6 0.5 C8.9 0.5 10.8 1.2 12.65 4.25 C10.8 7.3 8.9 8.0 6.6 8.0 C4.3 8.0 2.4 7.3 0.55 4.25 Z" fill="none" stroke="#333" stroke-width="1.05"/><circle cx="6.55" cy="3.5" r="3.05" fill="#333"/><path d="M4.9 3.3 L6.3 1.9" stroke="#eee" stroke-width="0.8" stroke-linecap="round"/></g><g transform="translate(44.90,495.45)"><path d="M0.55 4.25 C2.4 1.2 4.3 0.5 6.6 0.5 C8.9 0.5 10.8 1.2 12.65 4.25 C10.8 7.3 8.9 8.0 6.6 8.0 C4.3 8.0 2.4 7.3 0.55 4.25 Z" fill="none" stroke="#333" stroke-width="1.05"/><circle cx="6.55" cy="3.5" r="3.05" fill="#333"/><path d="M4.9 3.3 L6.3 1.9" stroke="#eee" stroke-width="0.8" stroke-linecap="round"/></g><g transform="translate(44.90,516.65)"><path d="M0.55 4.25 C2.4 1.2 4.3 0.5 6.6 0.5 C8.9 0.5 10.8 1.2 12.65 4.25 C10.8 7.3 8.9 8.0 6.6 8.0 C4.3 8.0 2.4 7.3 0.55 4.25 Z" fill="none" stroke="#333" stroke-width="1.05"/><circle cx="6.55" cy="3.5" r="3.05" fill="#333"/><path d="M4.9 3.3 L6.3 1.9" stroke="#eee" stroke-width="0.8" stroke-linecap="round"/></g><g transform="translate(44.90,537.85)"><path d="M0.55 4.25 C2.4 1.2 4.3 0.5 6.6 0.5 C8.9 0.5 10.8 1.2 12.65 4.25 C10.8 7.3 8.9 8.0 6.6 8.0 C4.3 8.0 2.4 7.3 0.55 4.25 Z" fill="none" stroke="#333" stroke-width="1.05"/><circle cx="6.55" cy="3.5" r="3.05" fill="#333"/><path d="M4.9 3.3 L6.3 1.9" stroke="#eee" stroke-width="0.8" stroke-linecap="round"/></g><g transform="translate(44.90,559.05)"><path d="M0.55 4.25 C2.4 1.2 4.3 0.5 6.6 0.5 C8.9 0.5 10.8 1.2 12.65 4.25 C10.8 7.3 8.9 8.0 6.6 8.0 C4.3 8.0 2.4 7.3 0.55 4.25 Z" fill="none" stroke="#333" stroke-width="1.05"/><circle cx="6.55" cy="3.5" r="3.05" fill="#333"/><path d="M4.9 3.3 L6.3 1.9" stroke="#eee" stroke-width="0.8" stroke-linecap="round"/></g><g transform="translate(44.90,580.25)"><path d="M0.55 4.25 C2.4 1.2 4.3 0.5 6.6 0.5 C8.9 0.5 10.8 1.2 12.65 4.25 C10.8 7.3 8.9 8.0 6.6 8.0 C4.3 8.0 2.4 7.3 0.55 4.25 Z" fill="none" stroke="#333" stroke-width="1.05"/><circle cx="6.55" cy="3.5" r="3.05" fill="#333"/><path d="M4.9 3.3 L6.3 1.9" stroke="#eee" stroke-width="0.8" stroke-linecap="round"/></g><g transform="translate(44.90,601.45)"><path d="M0.55 4.25 C2.4 1.2 4.3 0.5 6.6 0.5 C8.9 0.5 10.8 1.2 12.65 4.25 C10.8 7.3 8.9 8.0 6.6 8.0 C4.3 8.0 2.4 7.3 0.55 4.25 Z" fill="none" stroke="#333" stroke-width="1.05"/><circle cx="6.55" cy="3.5" r="3.05" fill="#333"/><path d="M4.9 3.3 L6.3 1.9" stroke="#eee" stroke-width="0.8" stroke-linecap="round"/></g>
<text transform="translate(62.49,78.90) scale(0.85,1)" font-size="9.4" letter-spacing="0.727" fill="#222">bounds</text><text transform="translate(62.66,100.10) scale(0.85,1)" font-size="9.4" letter-spacing="0.604" fill="#222">color</text><text transform="translate(62.66,121.30) scale(0.85,1)" font-size="9.4" letter-spacing="0.721" fill="#222">date</text><text transform="translate(62.66,142.50) scale(0.85,1)" font-size="9.4" letter-spacing="0.572" fill="#222">dColor</text><text transform="translate(62.66,163.70) scale(0.85,1)" font-size="9.4" letter-spacing="0.440" fill="#222">diabetes</text><text transform="translate(62.66,184.90) scale(0.85,1)" font-size="9.4" letter-spacing="0.465" fill="#222">dLabel</text><text transform="translate(62.45,206.10) scale(0.85,1)" font-size="9.4" letter-spacing="0.529" fill="#222">hColor</text><text transform="translate(62.45,227.30) scale(0.85,1)" font-size="9.4" letter-spacing="0.516" fill="#222">hLabel</text><text transform="translate(62.45,248.50) scale(0.85,1)" font-size="9.4" letter-spacing="0.601" fill="#222">hypertension</text><text transform="translate(62.47,269.70) scale(0.85,1)" font-size="9.4" letter-spacing="0.494" fill="#222">iColor</text><text transform="translate(62.47,290.90) scale(0.85,1)" font-size="9.4" letter-spacing="0.481" fill="#222">iLabel</text><text transform="translate(62.47,312.10) scale(0.85,1)" font-size="9.4" letter-spacing="0.446" fill="#222">inactivity</text><text transform="translate(62.34,333.30) scale(0.85,1)" font-size="9.4" letter-spacing="0.442" fill="#222">Kieran</text><text transform="translate(62.46,354.50) scale(0.85,1)" font-size="9.4" letter-spacing="0.645" fill="#222">label</text><text transform="translate(62.34,375.70) scale(0.85,1)" font-size="9.4" letter-spacing="0.694" fill="#222">New node</text><text transform="translate(62.34,396.90) scale(0.85,1)" font-size="9.4" letter-spacing="0.656" fill="#222">New node 2</text><text transform="translate(62.66,418.10) scale(0.85,1)" font-size="9.4" letter-spacing="0.399" fill="#222">obesity</text><text transform="translate(62.66,439.30) scale(0.85,1)" font-size="9.4" letter-spacing="0.572" fill="#222">oColor</text><text transform="translate(62.66,460.50) scale(0.85,1)" font-size="9.4" letter-spacing="0.489" fill="#222">oLabel</text><text transform="translate(62.49,481.70) scale(0.85,1)" font-size="9.4" letter-spacing="0.661" fill="#222">pColor</text><text transform="translate(62.49,502.90) scale(0.85,1)" font-size="9.4" letter-spacing="0.732" fill="#222">pIcon</text><text transform="translate(62.49,524.10) scale(0.85,1)" font-size="9.4" letter-spacing="0.792" fill="#222">population</text><text transform="translate(62.78,545.30) scale(0.85,1)" font-size="9.4" letter-spacing="0.336" fill="#222">selectedDate</text><text transform="translate(62.78,566.50) scale(0.85,1)" font-size="9.4" letter-spacing="0.383" fill="#222">selectedIndex</text><text transform="translate(62.64,587.70) scale(0.85,1)" font-size="9.4" letter-spacing="0.195" fill="#222">State</text><text transform="translate(62.64,608.90) scale(0.85,1)" font-size="9.4" letter-spacing="0.324" fill="#222">Statistic</text><text transform="translate(43.17,58.00) scale(0.85,1)" font-size="9.4" letter-spacing="0.342" fill="#222">viewstates</text><text x="25.40" y="12.50" font-size="9.45" textLength="64.32" lengthAdjust="spacingAndGlyphs" fill="#333" font-weight="bold">Template Editor</text><text x="23.43" y="36.10" font-size="10" textLength="34.50" lengthAdjust="spacingAndGlyphs" fill="#666">Search ...</text><text x="202.10" y="36.80" font-size="9.9" textLength="44.58" lengthAdjust="spacingAndGlyphs" fill="#222">Basic mode</text><text x="266.53" y="36.80" font-size="9.9" textLength="18.83" lengthAdjust="spacingAndGlyphs" fill="#111">each</text><text x="362.08" y="37.00" font-size="10" textLength="43.16" lengthAdjust="spacingAndGlyphs" fill="#222">Add Helper</text><text x="438.68" y="37.00" font-size="10" textLength="47.68" lengthAdjust="spacingAndGlyphs" fill="#222">Auto-format</text><text x="623.69" y="679.10" font-size="10" textLength="12.51" lengthAdjust="spacingAndGlyphs" fill="#333">OK</text><text x="668.88" y="679.10" font-size="10" textLength="22.23" lengthAdjust="spacingAndGlyphs" fill="#333">Apply</text><text x="723.17" y="679.10" font-size="10" textLength="26.40" lengthAdjust="spacingAndGlyphs" fill="#333">Cancel</text>
</svg>
</div></body></html>
